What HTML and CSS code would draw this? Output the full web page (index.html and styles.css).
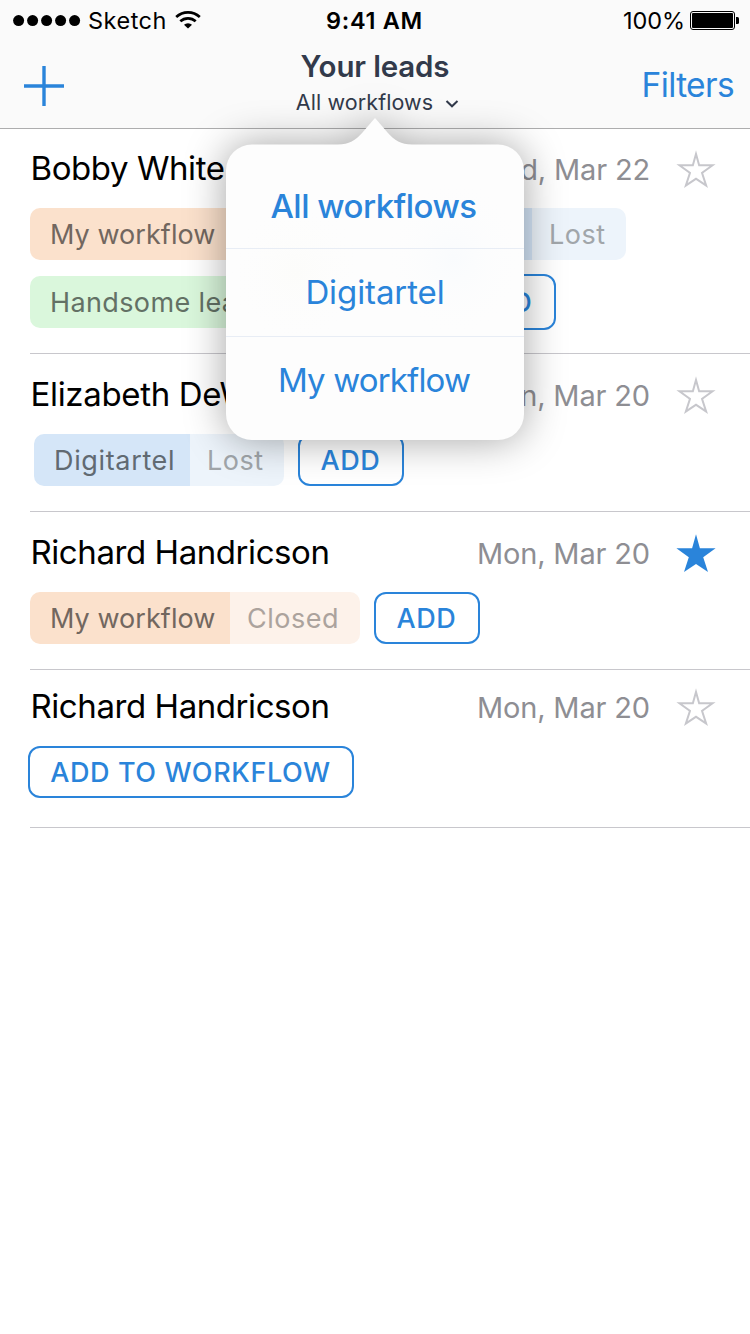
FILE: index.html
```html
<!DOCTYPE html>
<html lang="en">
<head>
<meta charset="utf-8">
<title>Your leads</title>
<link rel="stylesheet" href="styles.css">
</head>
<body>
<svg class="defs" width="0" height="0" aria-hidden="true">
  <defs>
    <path id="star-path" d="M20 0.3 23.9 14.3H39.6L27.2 23.2 32 38 20 30 8 38 12.8 23.2 0.4 14.3H16.1Z"/>
    <clipPath id="star-clip"><use href="#star-path"/></clipPath>
    <symbol id="star" viewBox="0 0 40 40"><use href="#star-path" fill="none" stroke="#c7c7cc" stroke-width="4" clip-path="url(#star-clip)"/></symbol>
    <symbol id="star-full" viewBox="0 0 40 40"><use href="#star-path" fill="#2a84da"/></symbol>
  </defs>
</svg>
<header class="header">
  <div class="status">
    <div class="carrier">
      <svg class="signal" width="68" height="12"><g><circle cx="5.6" cy="5.600" r="5.5"/><circle cx="19.6" cy="5.600" r="5.5"/><circle cx="33.6" cy="5.600" r="5.5"/><circle cx="47.6" cy="5.600" r="5.5"/><circle cx="61.6" cy="5.600" r="5.5"/></g></svg>
      <span class="carrier-name">Sketch</span>
      <svg class="wifi" width="26" height="18" viewBox="0 0 26 18" fill="none" stroke="#000" stroke-width="2.7"><path d="M1.2 6.1Q6.3 1.4 13 1.4T24.8 6.1"/><path d="M5.3 10.3Q8.6 7.3 13 7.3T20.7 10.3"/><path d="M13 17.6 9 13.8Q10.6 12.2 13 12.2T17 13.8Z" fill="#000" stroke="none"/></svg>
    </div>
    <span class="time">9:41 AM</span>
    <div class="power">
      <span class="percent">100%</span>
      <svg class="battery" width="50" height="20" viewBox="0 0 50 20"><rect x=".5" y=".5" width="44" height="18" rx="2.5" fill="none" stroke="#000"/><rect x="2" y="2" width="41" height="15" rx="1"/><path d="M46 6h1.5q1.5 0 1.5 1.5v4q0 1.5-1.5 1.5H46z"/></svg>
    </div>
  </div>
  <div class="nav">
    <svg class="plus" width="40" height="40"><path d="M20 0V40M0 20H40" stroke="#2a84da" stroke-width="3.4"/></svg>
    <div class="heading">
      <h1 class="title">Your leads</h1>
      <div class="scope"><span class="scope-name">All workflows</span><svg class="chevron" width="14" height="10" fill="none" stroke="#323a4b" stroke-width="2"><path d="M1.5 2 7 7.3 12.5 2"/></svg></div>
    </div>
    <a class="filters">Filters</a>
  </div>
</header>

<main class="leads">
  <section class="lead lead-first">
    <div class="lead-head"><h2 class="name">Bobby White</h2><span class="date">Wed, Mar 22</span><svg class="star"><use href="#star"/></svg></div>
    <div class="tags">
      <div class="tag orange"><span class="flow my-flow">My workflow</span><span class="stage closed"></span></div>
      <div class="tag blue"><span class="flow digi"></span><span class="stage lost">Lost</span></div>
    </div>
    <div class="tags second">
      <div class="tag green"><span class="flow handsome">Handsome leads</span><span class="stage rest"></span></div>
      <button class="add add-tall">ADD</button>
    </div>
  </section>
  <section class="lead">
    <div class="lead-head"><h2 class="name elizabeth">Elizabeth DeWitt</h2><span class="date">Mon, Mar 20</span><svg class="star"><use href="#star"/></svg></div>
    <div class="tags indented">
      <div class="tag blue"><span class="flow digi">Digitartel</span><span class="stage lost">Lost</span></div>
      <button class="add">ADD</button>
    </div>
  </section>
  <section class="lead">
    <div class="lead-head"><h2 class="name">Richard Handricson</h2><span class="date">Mon, Mar 20</span><svg class="star"><use href="#star-full"/></svg></div>
    <div class="tags">
      <div class="tag orange"><span class="flow my-flow">My workflow</span><span class="stage closed">Closed</span></div>
      <button class="add">ADD</button>
    </div>
  </section>
  <section class="lead lead-last">
    <div class="lead-head"><h2 class="name">Richard Handricson</h2><span class="date">Mon, Mar 20</span><svg class="star"><use href="#star"/></svg></div>
    <div class="tags">
      <button class="add add-wide">ADD TO WORKFLOW</button>
    </div>
  </section>
</main>

<nav class="popover">
  <svg class="popover-shape" width="298" height="322" viewBox="0 0 298 322">
    <defs>
      <radialGradient id="tint-blue"><stop offset="0" stop-color="#f9fbfd"/><stop offset="1" stop-color="#fdfdfd" stop-opacity="0"/></radialGradient>
      <radialGradient id="tint-warm"><stop offset="0" stop-color="#fcfcfa"/><stop offset="1" stop-color="#fdfdfd" stop-opacity="0"/></radialGradient>
    </defs>
    <path fill="#fdfdfd" d="M149 0 161.500 14.500C168.500 22.500 175 26.500 186 26.500H272A26 26 0 0 1 298 52.500V296A26 26 0 0 1 272 322H26A26 26 0 0 1 0 296V52.500A26 26 0 0 1 26 26.500H112C123 26.500 129.500 22.500 136.500 14.500Z"/>
    <ellipse cx="228" cy="140" rx="70" ry="80" fill="url(#tint-blue)"/>
    <ellipse cx="70" cy="155" rx="70" ry="75" fill="url(#tint-warm)"/>
  </svg>
  <a class="option all">All workflows</a>
  <a class="option digitartel">Digitartel</a>
  <a class="option mine">My workflow</a>
</nav>
</body>
</html>
```

FILE: styles.css
```css
* { box-sizing: border-box; }
body {
  margin: 0;
  width: 750px;
  height: 1334px;
  overflow: hidden;
  position: relative;
  background: #fff;
  color: #000;
  font-family: Inter, "Liberation Sans", sans-serif;
}
svg { display: block; flex: none; }
.defs { position: absolute; }
h1, h2 { margin: 0; }

.header {
  height: 129px;
  background: #fafafa;
  border-bottom: 1px solid #adadae;
}
.status {
  height: 41px;
  display: grid;
  grid-template-columns: 1fr auto 1fr;
  align-items: center;
  padding: 0 10px 0 13px;
  font-size: 23.5px;
  line-height: 41px;
  white-space: nowrap;
}
.carrier { display: flex; align-items: center; }
.carrier-name { width: 87px; padding-left: 7px; letter-spacing: .5px; }
.wifi { margin-left: 7px; margin-top: -1px; }
.time { font-weight: 600; letter-spacing: .7px; margin: 0 1px 0 -3px; }
.power { display: flex; align-items: center; justify-content: flex-end; }
.percent { margin-right: 5px; letter-spacing: -.1px; }
.nav {
  height: 87px;
  display: grid;
  grid-template-columns: 1fr auto 1fr;
  padding: 0 16px 0 24px;
  white-space: nowrap;
}
.plus { margin-top: 25px; }
.heading { display: flex; flex-direction: column; align-items: center; margin-left: -8px; }
.title { font-size: 29.500px; line-height: 40px; font-weight: 600; color: #323a4b; margin-top: 5px; letter-spacing: -.15px; }
.scope { display: flex; align-items: center; margin-left: 5px; font-size: 21.500px; line-height: 32px; color: #323a4b; letter-spacing: .1px; }
.chevron { margin-left: 12px; margin-top: 4px; }
.filters { color: #2a84da; font-size: 33.500px; line-height: 40px; margin-top: 24px; text-align: right; letter-spacing: -.65px; }

.lead {
  height: 158px;
  margin-left: 30px;
  padding-top: 15px;
  border-bottom: 1px solid #c8c7cc;
}
.lead-first { height: 225px; padding-top: 14px; }
.lead-last { padding-top: 11px; }
.lead-head { height: 50px; display: flex; align-items: center; white-space: nowrap; }
.name { flex: 1; padding-left: .5px; font-weight: 400; font-size: 33px; line-height: 50px; letter-spacing: -.43px; }
.name.elizabeth { letter-spacing: -.33px; }
.date { color: #8e8e93; font-size: 29px; line-height: 50px; padding-top: 3px; letter-spacing: -.15px; }
.star { width: 40px; height: 40px; margin: 3px 34px 0 26px; }

.tags { display: flex; align-items: center; height: 52px; margin-top: 15px; gap: 14px; }
.tags.second { margin-top: 16px; }
.tags.indented { margin-left: 4px; }
.tag {
  display: flex;
  height: 52px;
  border-radius: 10px;
  overflow: hidden;
  font-size: 27px;
  line-height: 54px;
  letter-spacing: .5px;
  white-space: nowrap;
}
.tag + .tag { margin-left: 2px; }
.flow { padding-left: 20px; }
.stage { padding-left: 17px; }
.my-flow { width: 200px; letter-spacing: .05px; }
.digi { width: 156px; letter-spacing: .65px; }
.handsome { width: 250px; letter-spacing: .38px; }
.closed { width: 130px; }
.lost { width: 94px; }
.rest { width: 156px; }
.orange .flow { background: #fbe1cc; color: #72675f; }
.orange .stage { background: #fdf2ea; color: #aca39d; }
.blue .flow { background: #d5e6f8; color: #616a72; }
.blue .stage { background: #edf4fb; color: #a1a6aa; }
.green .flow { background: #daf7dc; color: #637165; }
.green .stage { background: #effcf0; color: #a1a9a2; }
.add {
  width: 106px;
  height: 52px;
  padding: 2px 1px 0 0;
  border: 2px solid #2a84da;
  border-radius: 12px;
  background: none;
  color: #2a84da;
  font: 500 27px/46px Inter, "Liberation Sans", sans-serif;
  letter-spacing: .6px;
  white-space: nowrap;
}
.add-tall { height: 56px; }
.add-wide { width: 326px; margin-left: -2px; }

.popover {
  position: absolute;
  z-index: 1;
  left: 226px;
  top: 118px;
  width: 298px;
  height: 322px;
  padding-top: 43px;
  display: flex;
  flex-direction: column;
}
.popover-shape {
  position: absolute;
  inset: 0;
  z-index: -1;
  overflow: visible;
  filter: drop-shadow(0 0 20px rgba(0, 0, 0, .36));
}
.option {
  height: 88px;
  line-height: 86px;
  font-size: 33px;
  color: #2a84da;
  text-align: center;
  white-space: nowrap;
  border-bottom: 1px solid #e8edf5;
}
.option.all { font-weight: 500; line-height: 90px; letter-spacing: -.5px; padding-right: 3px; }
.option.digitartel { letter-spacing: -.1px; }
.option.mine { border: 0; letter-spacing: -.85px; padding-right: 2px; }
```
